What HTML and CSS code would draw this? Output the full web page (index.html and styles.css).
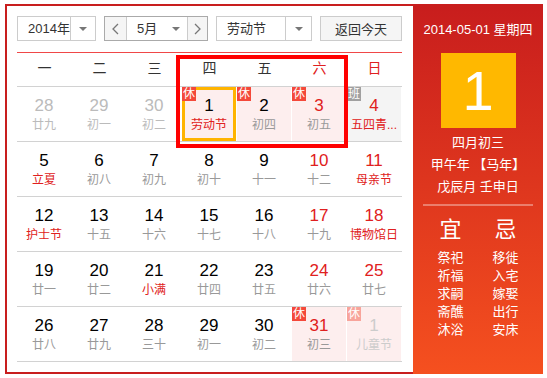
FILE: index.html
```html
<!DOCTYPE html>
<html lang="zh-CN">
<head>
    <meta charset="UTF-8">
    <title>万年历</title>
    <link rel="stylesheet" href="styles.css">
</head>
<body>

    <div class="calendar">
        <div class="main">
            <div class="toolbar">
                <div class="select year">
                    <span class="select-text">2014年</span>
                    <span class="select-arrow"><i class="caret"></i></span>
                </div>
                <div class="month-group">
                    <span class="nav-btn">
                        <svg width="7" height="12" viewBox="0 0 7 12"><polyline points="6,1 1,6 6,11" fill="none" stroke="#777" stroke-width="1.3"/></svg>
                    </span>
                    <span class="month-text">5月</span>
                    <span class="month-arrow"><i class="caret"></i></span>
                    <span class="nav-btn next">
                        <svg width="7" height="12" viewBox="0 0 7 12"><polyline points="1,1 6,6 1,11" fill="none" stroke="#777" stroke-width="1.3"/></svg>
                    </span>
                </div>
                <div class="select holiday">
                    <span class="select-text">劳动节</span>
                    <span class="select-arrow"><i class="caret"></i></span>
                </div>
                <button class="today-btn">返回今天</button>
            </div>

            <div class="grid">
                <div class="week head">
                    <span>一</span><span>二</span><span>三</span><span>四</span><span>五</span>
                    <span class="red">六</span><span class="red">日</span>
                </div>

                <div class="week">
                    <div class="day other"><b>28</b><em>廿九</em></div>
                    <div class="day other"><b>29</b><em>初一</em></div>
                    <div class="day other"><b>30</b><em>初二</em></div>
                    <div class="day rest today"><i class="tag">休</i><b>1</b><em class="fest">劳动节</em></div>
                    <div class="day rest"><i class="tag">休</i><b>2</b><em>初四</em></div>
                    <div class="day rest weekend"><i class="tag">休</i><b>3</b><em>初五</em></div>
                    <div class="day work weekend"><i class="tag">班</i><b>4</b><em class="fest">五四青...</em></div>
                </div>

                <div class="week">
                    <div class="day"><b>5</b><em class="fest">立夏</em></div>
                    <div class="day"><b>6</b><em>初八</em></div>
                    <div class="day"><b>7</b><em>初九</em></div>
                    <div class="day"><b>8</b><em>初十</em></div>
                    <div class="day"><b>9</b><em>十一</em></div>
                    <div class="day weekend"><b>10</b><em>十二</em></div>
                    <div class="day weekend"><b>11</b><em class="fest">母亲节</em></div>
                </div>

                <div class="week">
                    <div class="day"><b>12</b><em class="fest">护士节</em></div>
                    <div class="day"><b>13</b><em>十五</em></div>
                    <div class="day"><b>14</b><em>十六</em></div>
                    <div class="day"><b>15</b><em>十七</em></div>
                    <div class="day"><b>16</b><em>十八</em></div>
                    <div class="day weekend"><b>17</b><em>十九</em></div>
                    <div class="day weekend"><b>18</b><em class="fest">博物馆日</em></div>
                </div>

                <div class="week">
                    <div class="day"><b>19</b><em>廿一</em></div>
                    <div class="day"><b>20</b><em>廿二</em></div>
                    <div class="day"><b>21</b><em class="fest">小满</em></div>
                    <div class="day"><b>22</b><em>廿四</em></div>
                    <div class="day"><b>23</b><em>廿五</em></div>
                    <div class="day weekend"><b>24</b><em>廿六</em></div>
                    <div class="day weekend"><b>25</b><em>廿七</em></div>
                </div>

                <div class="week">
                    <div class="day"><b>26</b><em>廿八</em></div>
                    <div class="day"><b>27</b><em>廿九</em></div>
                    <div class="day"><b>28</b><em>三十</em></div>
                    <div class="day"><b>29</b><em>初一</em></div>
                    <div class="day"><b>30</b><em>初二</em></div>
                    <div class="day rest weekend"><i class="tag">休</i><b>31</b><em>初三</em></div>
                    <div class="day rest other next-month"><i class="tag">休</i><b>1</b><em>儿童节</em></div>
                </div>

                <!-- highlight around the holiday -->
                <div class="mark"></div>
            </div>
        </div>

        <div class="panel">
            <div class="panel-date">2014-05-01 星期四</div>
            <div class="big-day">1</div>
            <div class="lunar-info">
                <p>四月初三</p>
                <p>甲午年 【马年】</p>
                <p>戊辰月 壬申日</p>
            </div>
            <div class="almanac">
                <div class="almanac-col">
                    <h3>宜</h3>
                    <p>祭祀</p><p>祈福</p><p>求嗣</p><p>斋醮</p><p>沐浴</p>
                </div>
                <div class="almanac-col">
                    <h3>忌</h3>
                    <p>移徙</p><p>入宅</p><p>嫁娶</p><p>出行</p><p>安床</p>
                </div>
            </div>
        </div>
    </div>

</body>
</html>
```

FILE: styles.css
```css
* {
    margin: 0;
    padding: 0;
    box-sizing: border-box;
    font-family: "Liberation Sans", "Noto Sans CJK SC", sans-serif;
}

body {
    background: #fff;
    color: #333;
}

.calendar {
    display: flex;
    margin: 4px 0 0 5px;
    width: 538px;
    height: 370px;
}

/* Left part */
.main {
    width: 408px;
    height: 370px;
    border: 2px solid #c81e1e;
    border-right: none;
    padding: 10px 0 0 10px;
    background: #fff;
}

.toolbar {
    display: flex;
    gap: 8px;
    height: 25px;
    margin-bottom: 11px;
    font-size: 13px;
}

.select {
    display: flex;
    height: 25px;
    border: 1px solid #ccc;
    background: #fff;
}

.select-text {
    flex: 1;
    padding-left: 10px;
    line-height: 23px;
}

.select-arrow,
.month-arrow {
    display: flex;
    align-items: center;
    justify-content: center;
}

.select-arrow {
    width: 25px;
    border-left: 1px solid #ccc;
}

.caret {
    width: 0;
    height: 0;
    border-left: 4px solid transparent;
    border-right: 4px solid transparent;
    border-top: 4px solid #777;
}

.year {
    width: 79px;
}

.holiday {
    width: 96px;
}

.holiday .select-arrow {
    width: 26px;
}

.month-group {
    display: flex;
    width: 104px;
    height: 25px;
    border: 1px solid #aaa;
}

.nav-btn {
    display: flex;
    align-items: center;
    justify-content: center;
    width: 22px;
    background: #f5f5f5;
    border-right: 1px solid #ccc;
}

.nav-btn.next {
    width: 20px;
    border-right: none;
    border-left: 1px solid #ccc;
}

.month-text {
    width: 40px;
    padding-left: 10px;
    line-height: 23px;
}

.month-arrow {
    flex: 1;
    padding-right: 2px;
}

.today-btn {
    width: 82px;
    height: 25px;
    border: 1px solid #ccc;
    background: #f5f5f5;
    color: #333;
    font-size: 13px;
}

/* Grid */
.grid {
    position: relative;
    width: 385px;
    border-top: 1px solid #f04848;
}

.week {
    display: grid;
    grid-template-columns: repeat(7, 55px);
    border-bottom: 1px solid #d2d2d2;
}

.week:last-of-type {
    border-bottom: none;
}

.head {
    height: 34px;
}

.head span {
    text-align: center;
    line-height: 30px;
    font-size: 14px;
    color: #333;
}

.head .red {
    color: #e02020;
}

.day {
    position: relative;
    height: 54px;
    padding-top: 9px;
    text-align: center;
    border-right: 1px solid transparent;
    background-clip: padding-box;
}

.day b {
    display: block;
    font-weight: normal;
    font-size: 17px;
    line-height: 20px;
    color: #000;
}

.day em {
    display: block;
    font-style: normal;
    font-size: 12px;
    line-height: 18px;
    color: #999;
    white-space: nowrap;
}

.day.weekend b {
    color: #e02020;
}

.day em.fest {
    color: #e02020;
}

.day.other b,
.day.other em {
    color: #bbb;
}

.day.next-month b,
.day.next-month em {
    color: #ccc;
}

.day.rest {
    background-color: #fdeeee;
}

.day.work {
    background-color: #f4f4f4;
}

.day.today {
    box-shadow: inset 0 0 0 3px #ffb400;
}

.tag {
    position: absolute;
    top: 0;
    left: 0;
    width: 14px;
    height: 14px;
    background: #f4483a;
    color: #fff;
    font-style: normal;
    font-size: 12px;
    line-height: 14px;
    text-align: center;
}

.work .tag {
    background: #a0a0a0;
}

.next-month .tag {
    background: #f8a49b;
}

.mark {
    position: absolute;
    left: 159px;
    top: 2px;
    width: 172px;
    height: 93px;
    border: 4px solid #f00;
}

/* Right panel */
.panel {
    width: 130px;
    height: 370px;
    background: linear-gradient(to bottom, #c81d1d, #f5501f);
    color: #fff;
    text-align: center;
    padding-top: 16px;
}

.panel-date {
    font-size: 13px;
    line-height: 20px;
}

.big-day {
    width: 75px;
    height: 75px;
    margin: 13px auto 4px;
    background: #ffb800;
    font-size: 56px;
    line-height: 75px;
}

.lunar-info p {
    font-size: 13px;
    line-height: 22px;
}

.almanac {
    display: flex;
    justify-content: center;
    width: 110px;
    margin: 6px auto 0;
    padding-top: 10px;
    border-top: 2px solid rgba(255, 255, 255, 0.35);
}

.almanac-col {
    width: 56px;
}

.almanac-col h3 {
    font-size: 22px;
    font-weight: normal;
    line-height: 28px;
    margin-bottom: 5px;
}

.almanac-col p {
    font-size: 13px;
    line-height: 18px;
}
```
